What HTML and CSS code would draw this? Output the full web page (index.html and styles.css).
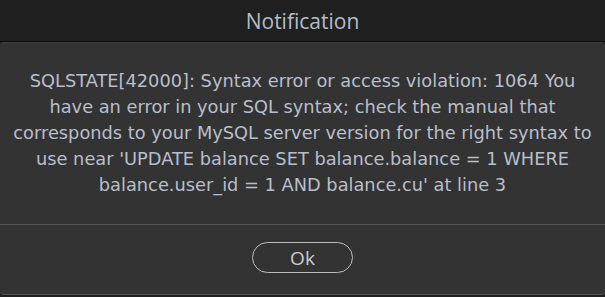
FILE: index.html
```html
<!DOCTYPE html>
<html lang="en">
<head>
    <meta charset="utf-8"/>
    <title>Notification</title>
    <link rel="stylesheet" href="styles.css">
</head>
<body>
<div class="dialog">
    <div class="dialog-title">Notification</div>
    <div class="dialog-panel">
        <div class="dialog-message">
            SQLSTATE[42000]: Syntax error or access violation: 1064 You have an error in your SQL syntax; check the manual that corresponds to your MySQL server version for the right syntax to use near 'UPDATE balance SET balance.balance = 1 WHERE balance.user_id = 1 AND balance.cu' at line 3
        </div>
        <div class="dialog-actions">
            <button class="ok-button">Ok</button>
        </div>
    </div>
</div>
</body>
</html>
```

FILE: styles.css
```css
html, body {
    margin: 0;
    padding: 0;
    background-color: #202020;
}

.dialog {
    width: 605px;
    height: 297px;
    display: flex;
    flex-direction: column;
    background-color: #202020;
}

.dialog-title {
    height: 41px;
    line-height: 42px;
    text-align: center;
    font-family: "Open Sans", "Noto Sans", sans-serif;
    font-size: 21px;
    color: #b4bccb;
    border-bottom: 1px solid #0e0e0e;
}

.dialog-panel {
    flex: 1;
    margin-bottom: 2px;
    background-color: #333333;
    border-radius: 4px;
    border-top: 1px solid #3c3c3c;
    border-bottom: 1px solid #555555;
    display: flex;
    flex-direction: column;
}

.dialog-message {
    height: 182px;
    box-sizing: border-box;
    padding: 25px 8px 0;
    text-align: center;
    font-family: "DejaVu Sans", Verdana, sans-serif;
    font-size: 17.8px;
    line-height: 26px;
    color: #b8bfcc;
    border-bottom: 1px solid #565656;
}

.dialog-actions {
    flex: 1;
    display: flex;
    justify-content: center;
    padding-top: 17px;
}

.ok-button {
    width: 101px;
    height: 31px;
    padding: 0;
    background: transparent;
    border: 1px solid #bdbdbd;
    border-radius: 16px;
    color: #cccccc;
    font-family: "Open Sans", "Noto Sans", sans-serif;
    font-size: 19px;
    cursor: pointer;
}
```
